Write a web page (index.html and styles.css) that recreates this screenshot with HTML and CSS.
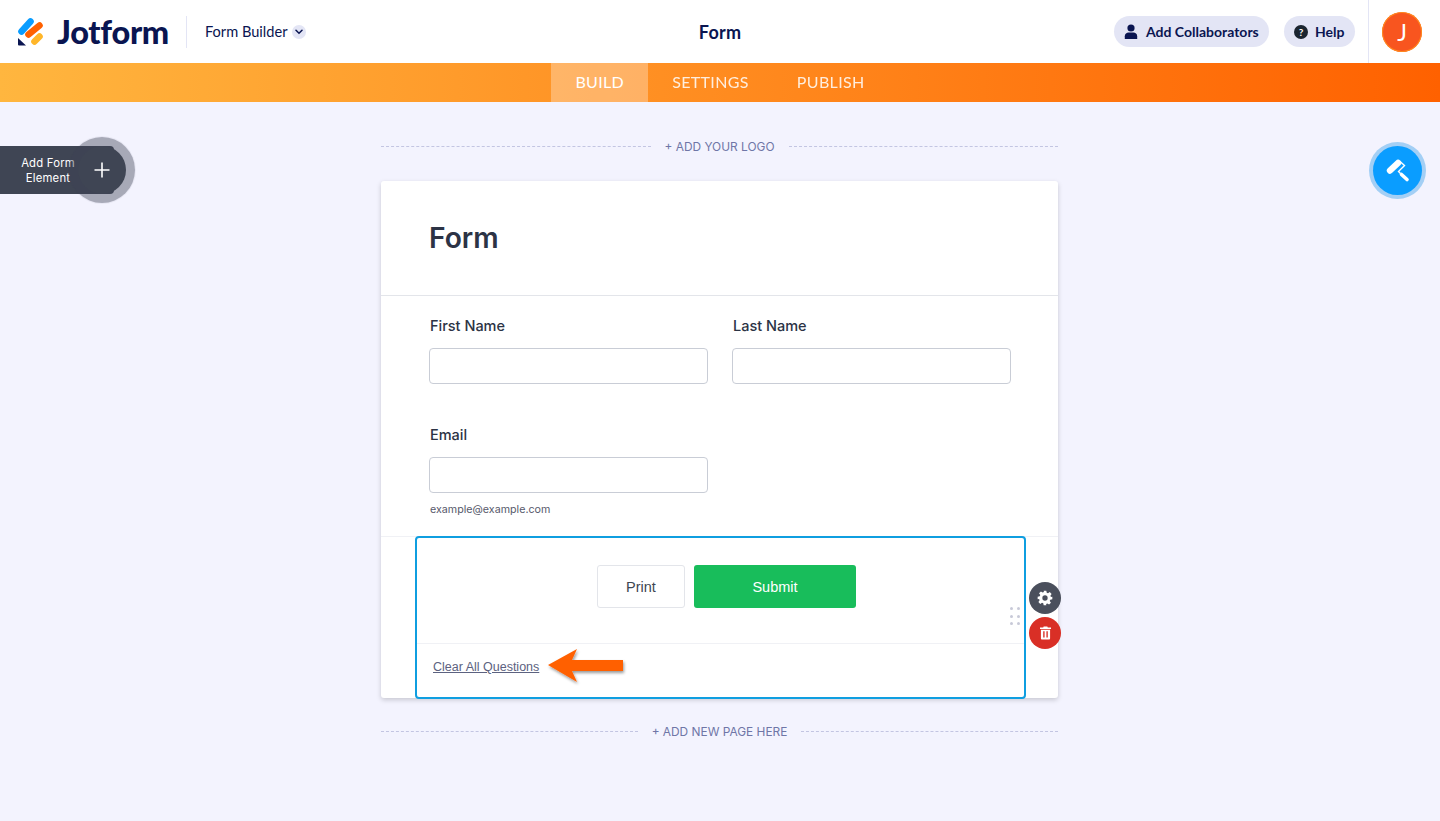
FILE: index.html
```html
<!DOCTYPE html>
<html lang="en">
<head>
    <meta charset="UTF-8">
    <title>Form Builder</title>
    <link rel="stylesheet" href="styles.css">
</head>
<body>

<header class="topbar">
    <div class="topbar-left">
        <svg class="logo-mark" width="26" height="28" viewBox="0 0 26 28">
            <path d="M3.5 13.5 L12.5 3.5" stroke="#0a9dff" stroke-width="6.6" stroke-linecap="round"/>
            <path d="M10.5 16.5 L21.5 7.5" stroke="#ff6100" stroke-width="6.6" stroke-linecap="round"/>
            <path d="M16.5 23.5 L21.5 18.5" stroke="#ffb629" stroke-width="6.6" stroke-linecap="round"/>
            <path d="M0 20 L8 27.5 L1 27.5 Q0 27.5 0 26.5 Z" fill="#0a1551"/>
        </svg>
        <span class="logo-text">Jotform</span>
        <span class="topbar-sep"></span>
        <span class="builder-label">Form Builder</span>
        <span class="chevron">
            <svg width="8" height="6" viewBox="0 0 8 6"><path d="M1 1.2 L4 4.2 L7 1.2" fill="none" stroke="#0a1551" stroke-width="1.5" stroke-linecap="round"/></svg>
        </span>
    </div>
    <div class="topbar-title">Form</div>
    <div class="topbar-right">
        <button class="pill pill-collab">
            <svg class="pill-icon" width="14" height="15" viewBox="0 0 14 15"><circle cx="7" cy="4" r="3.6" fill="#0a1551"/><path d="M0.8 15 V12.2 C0.8 9.8 2.8 8.6 4.5 8.6 H9.5 C11.2 8.6 13.2 9.8 13.2 12.2 V15 Z" fill="#0a1551"/></svg>
            Add Collaborators
        </button>
        <button class="pill pill-help">
            <span class="help-icon">?</span>
            Help
        </button>
        <div class="avatar-wrap"><span class="avatar">J</span></div>
    </div>
</header>

<nav class="tabs">
    <a class="tab tab-active">BUILD</a>
    <a class="tab">SETTINGS</a>
    <a class="tab">PUBLISH</a>
</nav>

<main class="canvas">
    <div class="add-element">
        <span class="add-label">Add Form<br>Element</span>
        <span class="add-round">
            <svg width="16" height="16" viewBox="0 0 16 16"><path d="M8 0.5 V15.5 M0.5 8 H15.5" stroke="#fff" stroke-width="1.6"/></svg>
        </span>
    </div>

    <div class="paint-btn">
        <svg width="24" height="24" viewBox="0 0 24 24">
            <path d="M4 11.5 L12 4" stroke="#fff" stroke-width="6.4" stroke-linecap="round"/>
            <path d="M13.5 2 L18.5 6.5 L12.5 12.5 L14.5 14.5" fill="none" stroke="#fff" stroke-width="1.4"/>
            <path d="M15.5 15.5 L21 20.5" stroke="#fff" stroke-width="3.6" stroke-linecap="round"/>
        </svg>
    </div>

    <div class="form-column">
        <div class="dash-row logo-row">
            <span class="dash"></span>
            <span class="dash-text">+ ADD YOUR LOGO</span>
            <span class="dash"></span>
        </div>

        <div class="form-card">
            <div class="form-head">
                <h1>Form</h1>
            </div>

            <div class="form-body">
                <div class="field-row">
                    <div class="field">
                        <label>First Name</label>
                        <input type="text">
                    </div>
                    <div class="field">
                        <label>Last Name</label>
                        <input type="text">
                    </div>
                </div>
                <div class="field field-email">
                    <label>Email</label>
                    <input type="text">
                    <span class="hint">example@example.com</span>
                </div>
            </div>

            <div class="selected-wrap">
                <div class="selected">
                    <div class="btn-row">
                        <button class="btn-print">Print</button>
                        <button class="btn-submit">Submit</button>
                    </div>
                    <div class="clear-row">
                        <a class="clear-link">Clear All Questions</a>
                    </div>
                    <svg class="arrow" width="84" height="44" viewBox="0 0 84 44">
                        <defs>
                            <filter id="arrowShadow" x="-20%" y="-20%" width="140%" height="150%">
                                <feDropShadow dx="1" dy="2" stdDeviation="1.5" flood-color="#000" flood-opacity="0.4"/>
                            </filter>
                        </defs>
                        <path d="M1 18 L30 2 L25 13 L76 13 L76 24 L25 24 L30 35 Z" fill="#ff6100" filter="url(#arrowShadow)"/>
                    </svg>
                    <span class="grip"><i></i><i></i><i></i><i></i><i></i><i></i></span>
                    <div class="tool-btns">
                        <span class="tool tool-gear">
                            <svg width="16" height="16" viewBox="0 0 24 24"><path fill="#fff" fill-rule="evenodd" d="M10 1h4l.6 3.1 1.9.8 2.6-1.8 2.8 2.8-1.8 2.6.8 1.9L23 10v4l-3.1.6-.8 1.9 1.8 2.6-2.8 2.8-2.6-1.8-1.9.8L14 23h-4l-.6-3.1-1.9-.8-2.6 1.8-2.8-2.8 1.8-2.6-.8-1.9L1 14v-4l3.1-.6.8-1.9-1.8-2.6 2.8-2.8 2.6 1.8 1.9-.8zM12 8a4 4 0 1 0 0 8 4 4 0 0 0 0-8z"/></svg>
                        </span>
                        <span class="tool tool-trash">
                            <svg width="11" height="14" viewBox="0 0 12 14"><path fill="#fff" fill-rule="evenodd" d="M4 0h4l.5 1H12v1.5H0V1h3.5zM1 3.5h10V13a1 1 0 0 1-1 1H2a1 1 0 0 1-1-1zM3.5 5.2v6.8h1.5V5.2zM7 5.2v6.8h1.5V5.2z"/></svg>
                        </span>
                    </div>
                </div>
            </div>
        </div>

        <div class="dash-row page-row">
            <span class="dash"></span>
            <span class="dash-text">+ ADD NEW PAGE HERE</span>
            <span class="dash"></span>
        </div>
    </div>
</main>

</body>
</html>
```

FILE: styles.css
```css
* {
    box-sizing: border-box;
}
html, body {
    height: 100%;
}
body {
    margin: 0;
    font-family: "Inter", "Liberation Sans", sans-serif;
    background-color: #f3f3fe;
    overflow: hidden;
}

/* top bar */
.topbar {
    height: 63px;
    background-color: #fff;
    display: grid;
    grid-template-columns: 1fr auto 1fr;
    align-items: center;
    color: #0a1551;
}
.topbar-left {
    display: flex;
    align-items: center;
    padding-left: 18px;
}
.logo-mark {
    flex: none;
}
.logo-text {
    font-family: "Lato", sans-serif;
    font-weight: 900;
    font-size: 32.5px;
    letter-spacing: -0.3px;
    margin-left: 13px;
}
.topbar-sep {
    width: 1px;
    height: 32px;
    background-color: #e3e5f5;
    margin: 0 18px 0 17px;
}
.builder-label {
    font-family: "Lato", sans-serif;
    font-size: 14.6px;
}
.chevron {
    width: 14px;
    height: 14px;
    border-radius: 50%;
    background-color: #e3e5f5;
    margin-left: 5px;
    display: flex;
    align-items: center;
    justify-content: center;
}
.topbar-title {
    font-family: "Lato", sans-serif;
    font-size: 18px;
    font-weight: 700;
    letter-spacing: 0.2px;
}
.topbar-right {
    display: flex;
    align-items: center;
    justify-content: flex-end;
    height: 100%;
}
.pill {
    height: 31px;
    border: none;
    border-radius: 16px;
    background-color: #e3e5f5;
    color: #0a1551;
    font-family: "Lato", sans-serif;
    font-size: 14px;
    font-weight: 700;
    white-space: nowrap;
    display: flex;
    align-items: center;
    gap: 8px;
    padding: 0 10px;
}
.pill-icon {
    flex: none;
}
.pill-collab {
    width: 155px;
    padding-left: 10px;
    margin-right: 15px;
}
.pill-help {
    width: 71px;
    margin-right: 13px;
    gap: 7px;
}
.help-icon {
    width: 14px;
    height: 14px;
    flex: none;
    border-radius: 50%;
    background-color: #1b2530;
    color: #fff;
    font-size: 10px;
    line-height: 14px;
    text-align: center;
}
.avatar-wrap {
    height: 100%;
    width: 72px;
    border-left: 1px solid #e3e5f5;
    display: flex;
    align-items: center;
    padding-left: 13px;
}
.avatar {
    width: 40px;
    height: 40px;
    border-radius: 50%;
    background-color: #f8551f;
    box-shadow: inset 0 0 0 1px #ff8a1e;
    color: #fff;
    font-family: "Lato", sans-serif;
    font-size: 23px;
    display: flex;
    align-items: center;
    justify-content: center;
}

/* orange tabs */
.tabs {
    height: 39px;
    background: linear-gradient(90deg, #ffb63f 0%, #ff6100 100%);
    display: flex;
    justify-content: center;
}
.tab {
    color: #fff;
    font-family: "Lato", sans-serif;
    font-size: 16px;
    letter-spacing: 0.35px;
    line-height: 37px;
    padding: 0 24px;
    opacity: 0.85;
}
.tab-active {
    background-color: rgba(255, 255, 255, 0.3);
    opacity: 1;
}

/* canvas */
.canvas {
    position: relative;
    display: flex;
    justify-content: center;
    padding-top: 35px;
}
.add-element {
    position: absolute;
    left: 0;
    top: 44px;
    width: 114px;
    height: 48px;
    background-color: #3f4554;
    border-radius: 0 4px 4px 0;
    color: #fff;
    display: flex;
    align-items: center;
}
.add-label {
    width: 78px;
    padding: 1px 0 0 18px;
    font-size: 11.3px;
    line-height: 15px;
    text-align: center;
    letter-spacing: 0.2px;
    white-space: nowrap;
}
.add-round {
    position: absolute;
    left: 78px;
    top: 0;
    width: 48px;
    height: 48px;
    border-radius: 50%;
    background-color: #3f4554;
    box-shadow: 0 0 0 9px rgba(60, 65, 85, 0.38), 0 0 0 10px rgba(60, 65, 85, 0.06);
    display: flex;
    align-items: center;
    justify-content: center;
}
.paint-btn {
    position: absolute;
    left: 1373px;
    top: 44px;
    width: 49px;
    height: 49px;
    border-radius: 50%;
    background-color: #0a9dff;
    box-shadow: 0 0 0 4px #a3cff5;
    display: flex;
    align-items: center;
    justify-content: center;
}
.form-column {
    width: 677px;
    flex: none;
    margin-right: 1px;
}
.dash-row {
    display: flex;
    align-items: center;
    gap: 14px;
    height: 18px;
}
.dash {
    flex: 1;
    border-top: 1px dashed #c3c5e2;
}
.dash-text {
    font-size: 11.9px;
    color: #6f76a7;
    white-space: nowrap;
}
.logo-row {
    margin-bottom: 26px;
    margin-top: 0;
}
.page-row {
    margin-top: 24px;
}

/* form card */
.form-card {
    background-color: #fff;
    border-radius: 3px;
    box-shadow: 0 2px 5px rgba(0, 0, 0, 0.18);
    height: 517px;
}
.form-head {
    height: 115px;
    border-bottom: 1px solid #e3e5ea;
    padding: 37px 48px 0;
}
h1 {
    margin: 0;
    font-size: 28.2px;
    line-height: 40px;
    font-weight: 600;
    color: #2c3345;
}
.form-body {
    height: 241px;
    padding: 20px 48px 0;
    border-bottom: 1px solid #f0f1f5;
}
.field-row {
    display: flex;
    gap: 24px;
}
.field label {
    display: block;
    margin-left: 1px;
    font-size: 14.5px;
    line-height: 20px;
    font-weight: 500;
    color: #2c3345;
    margin-bottom: 12px;
}
.field input {
    display: block;
    width: 279px;
    height: 36px;
    border: 1px solid #c9cdd6;
    border-radius: 4px;
    background-color: #fff;
}
.field-email {
    margin-top: 41px;
}
.hint {
    display: block;
    margin: 10px 0 0 1px;
    font-size: 10.7px;
    line-height: 14px;
    color: #57596b;
}

/* selected section */
.selected-wrap {
    padding: 0 33px 0 34px;
    margin-top: -1px;
}
.selected {
    position: relative;
    width: 611px;
    height: 163px;
    border: 2px solid #0f9ee0;
    border-radius: 4px;
}
.btn-row {
    height: 106px;
    border-bottom: 1px solid #f0f1f5;
    display: flex;
    justify-content: center;
    gap: 9px;
    padding: 27px 0 0 12px;
}
.btn-print {
    width: 88px;
    height: 43px;
    background-color: #fff;
    border: 1px solid #e3e5ea;
    border-radius: 3px;
    color: #3e4652;
    font-family: "Liberation Sans", sans-serif;
    font-size: 14.5px;
}
.btn-submit {
    width: 162px;
    height: 43px;
    background-color: #18bd5b;
    border: none;
    border-radius: 3px;
    color: #fff;
    font-family: "Liberation Sans", sans-serif;
    font-size: 14.5px;
}
.clear-row {
    padding: 11px 0 0 16px;
}
.clear-link {
    font-family: "Liberation Sans", sans-serif;
    font-size: 12.5px;
    color: #5c6280;
    text-decoration: underline;
}
.arrow {
    position: absolute;
    left: 130px;
    top: 109px;
}
.grip {
    position: absolute;
    left: 593px;
    top: 69px;
    display: grid;
    grid-template-columns: 3px 3px;
    row-gap: 4.5px;
    column-gap: 4px;
}
.grip i {
    width: 3px;
    height: 3px;
    border-radius: 50%;
    background-color: #c8cad8;
}
.tool-btns {
    position: absolute;
    left: 612px;
    top: 44px;
    display: flex;
    flex-direction: column;
    gap: 3px;
}
.tool {
    width: 32px;
    height: 32px;
    border-radius: 50%;
    display: flex;
    align-items: center;
    justify-content: center;
}
.tool-gear {
    background-color: #4a4f5c;
}
.tool-trash {
    background-color: #d92f26;
}
```
